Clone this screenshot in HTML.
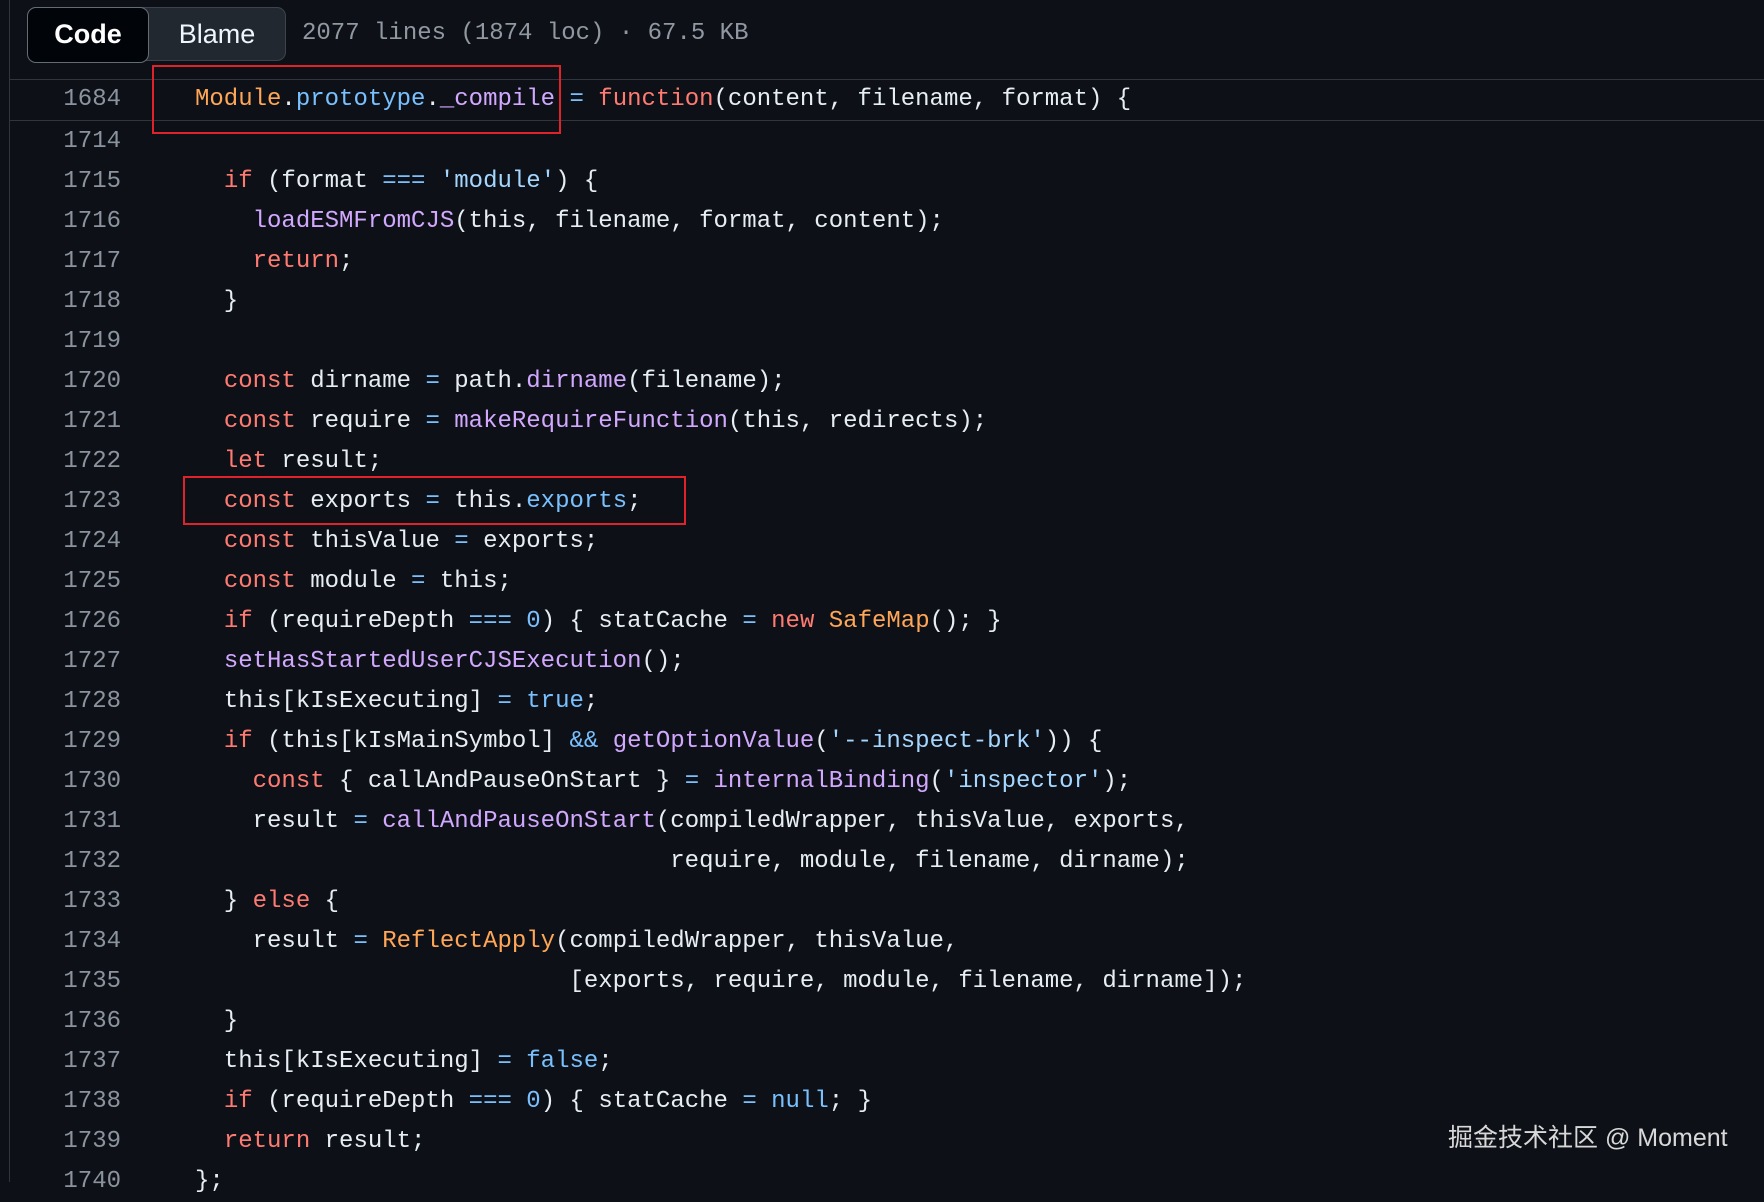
<!DOCTYPE html>
<html><head><meta charset="utf-8"><style>
body{margin:0;width:1764px;height:1182px;background:#0d1117;overflow:hidden;position:relative;font-family:"Liberation Mono",monospace;}
.vl{position:absolute;left:9px;top:0;width:1px;height:1182px;background:#30363d}
.hdr{position:absolute;left:10px;top:0;width:1754px;height:79px;background:#0d1117;border-bottom:1px solid #30363d}
.seg{position:absolute;left:27px;top:7px;width:259px;height:54px;border:1px solid #3d444d;border-radius:9px;background:#212830;box-sizing:border-box}
.code{position:absolute;left:-1px;top:-1px;width:120px;height:54px;border:1px solid #656c76;border-radius:9px;background:#010409;color:#fff;font:bold 27px "Liberation Sans",sans-serif;text-align:center;line-height:52px}
.blame{position:absolute;left:120px;top:0;width:138px;height:52px;color:#f0f6fc;font:27px "Liberation Sans",sans-serif;text-align:center;line-height:52px}
.info{position:absolute;left:302px;top:14px;color:#9198a1;font-size:24px;line-height:40px}
.hl{position:absolute;left:10px;top:79px;width:1754px;height:41px;border-bottom:1px solid #30363d}
.ln{position:absolute;width:121px;text-align:right;color:#8b949e;font-size:24px;line-height:40px}
.c{position:absolute;left:195px;color:#e6edf3;font-size:24px;line-height:40px;white-space:pre}
.k{color:#ff7b72}.f{color:#d2a8ff}.n{color:#79c0ff}.s{color:#a5d6ff}.o{color:#ffa657}
.box{position:absolute;border:2px solid #e0232b}
.wm{position:absolute;left:1448px;top:1118px;color:#d8d8d8;font:25px "Liberation Sans","Noto Sans CJK SC",sans-serif}
#L{position:absolute;left:0;top:2px;width:1764px;height:1182px}
</style></head><body>
<div class="vl"></div>
<div class="hdr"></div>
<div class="seg"><div class="code">Code</div><div class="blame">Blame</div></div>
<div class="info">2077 lines (1874 loc) · 67.5 KB</div>
<div class="hl"></div>
<div class="ln" style="top:80px">1684</div>
<div class="c" style="top:80px"><span class="o">Module</span>.<span class="n">prototype</span>.<span class="f">_compile</span> <span class="n">=</span> <span class="k">function</span>(content, filename, format) {</div>
<div id="L">
<div class="ln" style="top:120px">1714</div>
<div class="ln" style="top:160px">1715</div><div class="c" style="top:160px">  <span class="k">if</span> (format <span class="n">===</span> <span class="s">'module'</span>) {</div>
<div class="ln" style="top:200px">1716</div><div class="c" style="top:200px">    <span class="f">loadESMFromCJS</span>(this, filename, format, content);</div>
<div class="ln" style="top:240px">1717</div><div class="c" style="top:240px">    <span class="k">return</span>;</div>
<div class="ln" style="top:280px">1718</div><div class="c" style="top:280px">  }</div>
<div class="ln" style="top:320px">1719</div>
<div class="ln" style="top:360px">1720</div><div class="c" style="top:360px">  <span class="k">const</span> dirname <span class="n">=</span> path.<span class="f">dirname</span>(filename);</div>
<div class="ln" style="top:400px">1721</div><div class="c" style="top:400px">  <span class="k">const</span> require <span class="n">=</span> <span class="f">makeRequireFunction</span>(this, redirects);</div>
<div class="ln" style="top:440px">1722</div><div class="c" style="top:440px">  <span class="k">let</span> result;</div>
<div class="ln" style="top:480px">1723</div><div class="c" style="top:480px">  <span class="k">const</span> exports <span class="n">=</span> this.<span class="n">exports</span>;</div>
<div class="ln" style="top:520px">1724</div><div class="c" style="top:520px">  <span class="k">const</span> thisValue <span class="n">=</span> exports;</div>
<div class="ln" style="top:560px">1725</div><div class="c" style="top:560px">  <span class="k">const</span> module <span class="n">=</span> this;</div>
<div class="ln" style="top:600px">1726</div><div class="c" style="top:600px">  <span class="k">if</span> (requireDepth <span class="n">===</span> <span class="n">0</span>) { statCache <span class="n">=</span> <span class="k">new</span> <span class="o">SafeMap</span>(); }</div>
<div class="ln" style="top:640px">1727</div><div class="c" style="top:640px">  <span class="f">setHasStartedUserCJSExecution</span>();</div>
<div class="ln" style="top:680px">1728</div><div class="c" style="top:680px">  this[kIsExecuting] <span class="n">=</span> <span class="n">true</span>;</div>
<div class="ln" style="top:720px">1729</div><div class="c" style="top:720px">  <span class="k">if</span> (this[kIsMainSymbol] <span class="n">&amp;&amp;</span> <span class="f">getOptionValue</span>(<span class="s">'--inspect-brk'</span>)) {</div>
<div class="ln" style="top:760px">1730</div><div class="c" style="top:760px">    <span class="k">const</span> { callAndPauseOnStart } <span class="n">=</span> <span class="f">internalBinding</span>(<span class="s">'inspector'</span>);</div>
<div class="ln" style="top:800px">1731</div><div class="c" style="top:800px">    result <span class="n">=</span> <span class="f">callAndPauseOnStart</span>(compiledWrapper, thisValue, exports,</div>
<div class="ln" style="top:840px">1732</div><div class="c" style="top:840px">                                 require, module, filename, dirname);</div>
<div class="ln" style="top:880px">1733</div><div class="c" style="top:880px">  } <span class="k">else</span> {</div>
<div class="ln" style="top:920px">1734</div><div class="c" style="top:920px">    result <span class="n">=</span> <span class="o">ReflectApply</span>(compiledWrapper, thisValue,</div>
<div class="ln" style="top:960px">1735</div><div class="c" style="top:960px">                          [exports, require, module, filename, dirname]);</div>
<div class="ln" style="top:1000px">1736</div><div class="c" style="top:1000px">  }</div>
<div class="ln" style="top:1040px">1737</div><div class="c" style="top:1040px">  this[kIsExecuting] <span class="n">=</span> <span class="n">false</span>;</div>
<div class="ln" style="top:1080px">1738</div><div class="c" style="top:1080px">  <span class="k">if</span> (requireDepth <span class="n">===</span> <span class="n">0</span>) { statCache <span class="n">=</span> <span class="n">null</span>; }</div>
<div class="ln" style="top:1120px">1739</div><div class="c" style="top:1120px">  <span class="k">return</span> result;</div>
<div class="ln" style="top:1160px">1740</div><div class="c" style="top:1160px">};</div>
</div>
<div class="box" style="left:152px;top:65px;width:405px;height:65px"></div>
<div class="box" style="left:183px;top:476px;width:499px;height:45px"></div>
<div class="wm">掘金技术社区 @ Moment</div>
</body></html>
